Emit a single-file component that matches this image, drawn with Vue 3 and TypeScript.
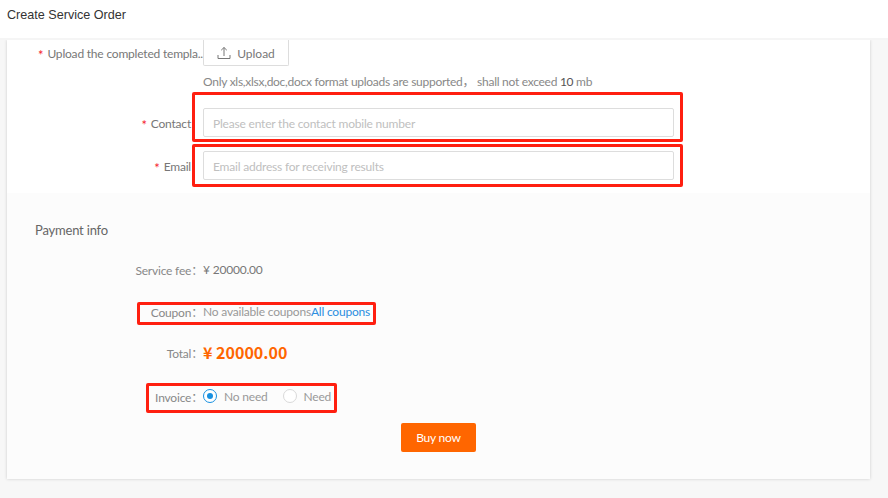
<script setup lang="ts">
const marks = [
  { left: 192, top: 92, width: 491, height: 50 },
  { left: 192, top: 144, width: 491, height: 43 },
  { left: 137, top: 302, width: 239, height: 23 },
  { left: 146, top: 383, width: 191, height: 30 },
]
const markStyle = (m: { left: number; top: number; width: number; height: number }) => ({
  left: `${m.left}px`,
  top: `${m.top}px`,
  width: `${m.width}px`,
  height: `${m.height}px`,
})
</script>

<template>
  <div class="page">
    <header class="head">Create Service Order</header>
    <main class="card">
      <section class="form">
        <div class="row upload-row">
          <label class="label"><i>*</i>Upload the completed templa..</label>
          <button class="upload" type="button">
            <svg width="14" height="14" viewBox="0 0 14 14" fill="none" stroke="#777" stroke-width="1">
              <path d="M7 10V1.5M4.2 4.2 7 1.5l2.8 2.7M1 9v3.5h12V9" />
            </svg>
            <span>Upload</span>
          </button>
        </div>
        <div class="hint">Only xls,xlsx,doc,docx format uploads are supported， shall not exceed <b>10</b> mb</div>
        <div class="row contact-row">
          <label class="label"><i>*</i>Contact</label>
          <input class="input" placeholder="Please enter the contact mobile number" />
        </div>
        <div class="row email-row">
          <label class="label"><i>*</i>Email</label>
          <input class="input" placeholder="Email address for receiving results" />
        </div>
      </section>
      <section class="pay">
        <h2 class="title">Payment info</h2>
        <div class="line fee">
          <span class="key">Service fee：</span><span class="val">¥ 20000.00</span>
        </div>
        <div class="line coupon">
          <span class="key">Coupon：</span><span class="muted">No available coupons</span><a class="link">All coupons</a>
        </div>
        <div class="line total">
          <span class="key">Total：</span><strong class="price">¥ 20000.00</strong>
        </div>
        <div class="line invoice">
          <span class="key">Invoice：</span>
          <span class="radio on"></span><span class="opt first">No need</span>
          <span class="radio"></span><span class="opt">Need</span>
        </div>
        <div class="actions"><button class="buy" type="button">Buy now</button></div>
      </section>
    </main>
    <div v-for="(m, i) in marks" :key="i" class="mark" :style="markStyle(m)"></div>
  </div>
</template>

<style scoped>
.page {
  position: relative;
  width: 888px;
  height: 498px;
  overflow: hidden;
  background: #f7f7f7;
  font-family: Lato, "Noto Sans CJK SC", sans-serif;
  font-size: 12px;
  font-weight: 400;
  letter-spacing: -0.2px;
  color: #777;
}
.head {
  position: relative;
  height: 40px;
  padding: 7px 0 0 7px;
  box-sizing: border-box;
  background: #fff;
  font-family: "Liberation Sans", Arial, sans-serif;
  font-size: 12.6px;
  letter-spacing: 0;
  line-height: 16px;
  color: #333;
  border-bottom: 2px solid #f5f5f5;
}
.card {
  width: 863px;
  height: 439px;
  margin-left: 7px;
  background: #fff;
  box-shadow: 0 0 3px rgba(0, 0, 0, 0.18);
}
.form {
  height: 153px;
  box-sizing: border-box;
}
.row {
  display: flex;
  align-items: center;
  height: 29px;
  box-sizing: border-box;
}
.label {
  width: 184px;
  margin-right: 12px;
  text-align: right;
  white-space: nowrap;
  flex: none;
  padding-top: 1px;
}
.label i {
  color: #f5222d;
  font-style: normal;
  margin-right: 4px;
  font-size: 13px;
  line-height: 0;
  vertical-align: -2px;
}
.upload-row {
  height: 26px;
}
.upload-row .label {
  width: 196px;
  margin-right: 0;
}
.upload {
  width: 86px;
  height: 26px;
  display: flex;
  align-items: center;
  justify-content: center;
  gap: 6px;
  padding: 1px 0 0;
  background: #fff;
  border: 1px solid #ddd;
  border-top: none;
  border-radius: 0 0 2px 2px;
  font: inherit;
  letter-spacing: 0;
  color: #777;
}
.hint {
  margin: 8px 0 0 196px;
  height: 16px;
  line-height: 16px;
  white-space: nowrap;
  letter-spacing: -0.27px;
  color: #888;
}
.hint b {
  font-weight: 400;
  color: #555;
}
.contact-row {
  margin-top: 18px;
}
.email-row {
  margin-top: 14px;
}
.input {
  width: 471px;
  height: 29px;
  box-sizing: border-box;
  padding: 1px 9px 0;
  border: 1px solid #ddd;
  border-radius: 2px;
  outline: none;
  font: inherit;
  letter-spacing: inherit;
  color: #666;
  background: #fff;
}
.input::placeholder {
  color: #c0c0c0;
  opacity: 1;
}
.pay {
  height: 286px;
  box-sizing: border-box;
  padding: 28px 0 0 28px;
  background: #fcfcfc;
}
.title {
  margin: 0;
  height: 18px;
  line-height: 18px;
  font-size: 13px;
  font-weight: 400;
  color: #666;
}
.line {
  display: flex;
  align-items: center;
  height: 20px;
  white-space: nowrap;
}
.key {
  width: 168px;
  text-align: right;
  flex: none;
  color: #888;
}
.fee {
  margin-top: 20px;
}
.coupon {
  margin-top: 22px;
}
.total {
  margin-top: 20px;
  height: 22px;
}
.invoice {
  margin-top: 23px;
}
.muted {
  color: #999;
}
.link {
  color: #2b8ee0;
}
.val {
  color: #777;
}
.price {
  font-family: "Noto Sans CJK SC", sans-serif;
  font-size: 16px;
  font-weight: 700;
  letter-spacing: 0;
  color: #ff6600;
}
.radio {
  width: 14px;
  height: 14px;
  box-sizing: border-box;
  border: 1px solid #d9d9d9;
  border-radius: 50%;
  background: #fff;
  flex: none;
  position: relative;
}
.radio.on {
  border-color: #1890e0;
}
.radio.on::after {
  content: "";
  position: absolute;
  inset: 3px;
  border-radius: 50%;
  background: #1890e0;
}
.opt {
  margin-left: 7px;
  color: #999;
}
.opt.first {
  margin-right: 15px;
}
.actions {
  margin: 17px 0 0 366px;
}
.buy {
  width: 75px;
  height: 29px;
  padding: 0;
  border: none;
  border-radius: 2px;
  background: #ff6600;
  color: #fff;
  font: inherit;
  letter-spacing: inherit;
}
.mark {
  position: absolute;
  box-sizing: border-box;
  border: 3px solid #ff1f10;
  border-radius: 2px;
  pointer-events: none;
}
</style>
